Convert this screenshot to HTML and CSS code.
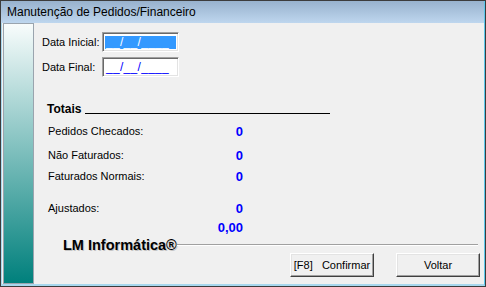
FILE: index.html
```html
<!DOCTYPE html>
<html>
	<head>
		<meta charset="UTF-8">
		<title>Manutenção de Pedidos/Financeiro</title>
		<link rel="stylesheet" href="styles.css">
  </head>
  <body>

    <div class="window">
      <div class="titlebar">Manutenção de Pedidos/Financeiro</div>
      <div class="client">
        <div class="sidebar"></div>
        <div class="content">

          <div class="dates">
            <div class="field">
              <span class="label">Data Inicial:</span>
              <span class="input"><span class="mask selected">__/__/____</span></span>
            </div>
            <div class="field">
              <span class="label">Data Final:</span>
              <span class="input"><span class="mask">__/__/____</span></span>
            </div>
          </div>

          <div class="totals-head">
            <span class="totals-title">Totais</span>
            <span class="totals-rule"></span>
          </div>

          <div class="totals">
            <span class="label">Pedidos Checados:</span><span class="value">0</span>
            <span class="label">Não Faturados:</span><span class="value">0</span>
            <span class="label">Faturados Normais:</span><span class="value">0</span>
            <span class="label">Ajustados:</span><span class="value">0</span>
            <span class="label"></span><span class="value">0,00</span>
          </div>

          <div class="brand">
            <span class="brand-name">LM Informática®</span>
            <span class="brand-rule"></span>
          </div>

          <div class="buttons">
            <button class="btn">[F8]   Confirmar</button>
            <button class="btn">Voltar</button>
          </div>

        </div>
      </div>
    </div>

  </body>
</html>
```

FILE: styles.css
```css
*, html, body {
  margin: 0;
  padding: 0;
  box-sizing: border-box;
}

body {
  width: 486px;
  height: 287px;
  overflow: hidden;
  font-family: "Liberation Sans", Arial, sans-serif;
  font-size: 11px;
  color: #000;
}

.window {
  width: 486px;
  height: 287px;
  border: 1px solid #3c3c3c;
  background: #f0f0f0;
  display: flex;
  flex-direction: column;
}

.titlebar {
  height: 22px;
  line-height: 22px;
  padding-left: 6px;
  font-size: 12px;
  background: linear-gradient(#98b2cd, #bed6ee);
  border-right: 1px solid #5cc8ec;
}

.client {
  flex: 1;
  display: flex;
  border-left: 1px solid #a8d8ee;
  border-right: 1px solid #5cc8ec;
  border-bottom: 2px solid #a8d8ee;
}

.sidebar {
  width: 31px;
  margin: 0 0 0 1px;
  border: 1px solid #9aa4ae;
  background: linear-gradient(#f8fcfc, #00807c);
}

.content {
  flex: 1;
  display: flex;
  flex-direction: column;
}

/* datas */
.dates {
  margin-top: 9px;
  padding-left: 8px;
  display: flex;
  flex-direction: column;
  gap: 5px;
}

.field {
  display: flex;
  align-items: center;
}

.field .label { width: 60px }

.input {
  width: 77px;
  height: 20px;
  background: #fff;
  border: 1px solid;
  border-color: #a0a0a0 #fff #fff #a0a0a0;
  box-shadow: inset 1px 1px 0 #696969, inset -1px -1px 0 #e3e3e3;
  padding: 3px 2px 0 2px;
  display: flex;
}

.mask {
  flex: 1;
  height: 13px;
  line-height: 13px;
  padding-left: 1px;
  font-size: 12px;
  letter-spacing: 0.3px;
  color: #0000ff;
}

.mask.selected {
  background: #3399ff;
  color: #fff;
}

/* totais */
.totals-head {
  margin-top: 25px;
  padding-left: 13px;
  display: flex;
  align-items: flex-start;
  height: 14px;
}

.totals-title {
  font-weight: bold;
  font-size: 12px;
  line-height: 14px;
}

.totals-rule {
  width: 245px;
  height: 12px;
  margin-left: 4px;
  border-bottom: 1px solid #000;
}

.totals {
  margin-top: 8px;
  margin-left: 14px;
  width: 195px;
  display: grid;
  grid-template-columns: 1fr auto;
  grid-template-rows: 24px 21px 32px 19px 14px;
  line-height: 14px;
}

.value {
  text-align: right;
  font-weight: bold;
  font-size: 13px;
  color: #0000ff;
  padding-top: 1px;
}

/* rodape */
.brand {
  margin-top: 4px;
  height: 15px;
  padding-left: 29px;
  padding-right: 6px;
  display: flex;
  align-items: center;
}

.brand-name {
  font-weight: bold;
  font-size: 14.5px;
  line-height: 15px;
  text-shadow: 1px 1px 0 #c4c4c4;
}

.brand-rule {
  flex: 1;
  margin-top: -1px;
  border-top: 1px solid #a0a0a0;
  border-bottom: 1px solid #fff;
}

.buttons {
  display: flex;
  justify-content: flex-end;
  gap: 22px;
  padding-right: 4px;
}

.btn {
  width: 84px;
  height: 24px;
  font-family: "Liberation Sans", Arial, sans-serif;
  font-size: 11px;
  white-space: pre;
  background: #f0f0f0;
  border: 1px solid;
  border-color: #fff #404040 #404040 #fff;
  box-shadow: inset -1px -1px 0 #a0a0a0, inset 1px 1px 0 #e3e3e3;
}
```
